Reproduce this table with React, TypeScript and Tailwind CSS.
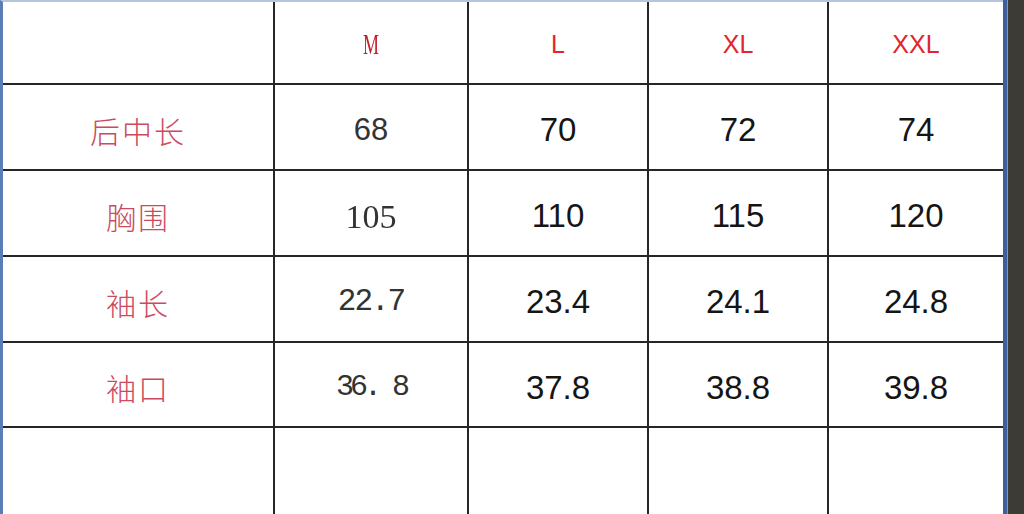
const sans = { fontFamily: '"Liberation Sans", Arial, sans-serif' }

type Cell = { text: string; cls: string }

const header: Cell[] = [
  { text: '', cls: '' },
  { text: 'M', cls: 'font-["Liberation_Serif",serif] text-[29px] text-[#c4202c] scale-x-[0.62]' },
  { text: 'L', cls: 'font-["Liberation_Sans",sans-serif] text-[25px] text-[#e0262e]' },
  { text: 'XL', cls: 'font-["Liberation_Sans",sans-serif] text-[25px] text-[#e0262e]' },
  { text: 'XXL', cls: 'font-["Liberation_Sans",sans-serif] text-[25px] text-[#e0262e]' },
]

const labelCls = 'font-["Noto_Sans_CJK_SC",sans-serif] font-light text-[30px] text-[#cc4a60] tracking-[2px]'
const numCls = 'font-["Liberation_Sans",sans-serif] text-[33px] text-[#151515]'

const rows: Cell[][] = [
  [
    { text: '后中长', cls: labelCls },
    { text: '68', cls: 'font-["Liberation_Sans",sans-serif] text-[31px] text-[#333]' },
    { text: '70', cls: numCls },
    { text: '72', cls: numCls },
    { text: '74', cls: numCls },
  ],
  [
    { text: '胸围', cls: labelCls },
    { text: '105', cls: 'font-["Liberation_Serif",serif] text-[34px] text-[#333] blur-[0.5px]' },
    { text: '110', cls: numCls },
    { text: '115', cls: numCls },
    { text: '120', cls: numCls },
  ],
  [
    { text: '袖长', cls: labelCls },
    { text: '22.7', cls: 'font-["Liberation_Mono",monospace] text-[31px] text-[#333] tracking-[-2px]' },
    { text: '23.4', cls: numCls },
    { text: '24.1', cls: numCls },
    { text: '24.8', cls: numCls },
  ],
  [
    { text: '袖口', cls: labelCls },
    { text: '36. 8', cls: 'font-["Liberation_Mono",monospace] text-[30px] text-[#333] tracking-[-4px]' },
    { text: '37.8', cls: numCls },
    { text: '38.8', cls: numCls },
    { text: '39.8', cls: numCls },
  ],
  [
    { text: '', cls: '' },
    { text: '', cls: '' },
    { text: '', cls: '' },
    { text: '', cls: '' },
    { text: '', cls: '' },
  ],
]

export default function App() {
  const all = [header, ...rows]
  return (
    <div className="flex h-[514px] w-[1024px] overflow-hidden bg-white" style={sans}>
      <div className="flex flex-1 flex-col border-l-[3px] border-t-2 border-l-[#5b7db5] border-t-[#b4c6dc]">
        <div className="grid flex-1 grid-cols-[270px_192px_178px_178px_174px] grid-rows-[81px_84px_84px_84px_83px_1fr] gap-[2px] bg-[#262626]">
          {all.flatMap((row, r) =>
            row.map((cell, c) => (
              <div
                key={`${r}-${c}`}
                className={`flex items-center justify-center bg-white ${r === 0 ? 'pt-[4px]' : 'pt-[6px]'}`}
              >
                {cell.text && <span className={`inline-block ${cell.cls}`}>{cell.text}</span>}
              </div>
            ))
          )}
        </div>
      </div>
      <div className="w-[4px] bg-[#3e5f9e]" />
      <div className="w-[1px] bg-[#8a97b0]" />
      <div className="flex-1 bg-[#3d3b36]" />
    </div>
  )
}
